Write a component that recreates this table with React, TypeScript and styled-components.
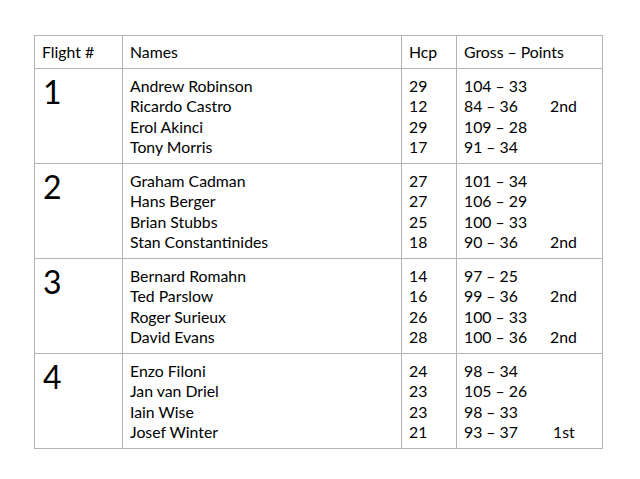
import React from "react";
import styled, { createGlobalStyle } from "styled-components";

const Global = createGlobalStyle`
  html, body { margin: 0; padding: 0; background: #fff; }
  body { font-family: Lato, "Open Sans", sans-serif; color: #000; }
`;

const Page = styled.div`
  width: 640px;
  height: 479px;
  padding: 35px 0 0 34px;
  box-sizing: border-box;
`;

const Table = styled.table`
  border-collapse: collapse;
  table-layout: fixed;
  width: 568px;
  font-size: 15.8px;
`;

const Th = styled.th<{ $w: number }>`
  width: ${(p) => p.$w}px;
  height: 33px;
  box-sizing: border-box;
  border: 1px solid #b4b4b4;
  text-align: left;
  font-weight: 400;
  padding: 0 0 2px 7px;
  vertical-align: middle;
`;

const Td = styled.td`
  border: 1px solid #b4b4b4;
  vertical-align: top;
  padding: 7px 0 0 7px;
  height: 95px;
  box-sizing: border-box;
`;

const Flight = styled.div`
  font-size: 32px;
  line-height: 1;
  margin-top: 0px;
  padding-left: 1px;
`;

const Line = styled.div`
  line-height: 20.4px;
  white-space: nowrap;
  display: flex;
`;

const Score = styled.span`
  width: 86px;
`;

const Place = styled.span<{ $shift: number }>`
  margin-left: ${(p) => p.$shift}px;
`;

type P = { name: string; hcp: string; score: string; place?: string; shift?: number };
const flights: P[][] = [
  [
    { name: "Andrew Robinson", hcp: "29", score: "104 – 33" },
    { name: "Ricardo Castro", hcp: "12", score: "84 – 36", place: "2nd" },
    { name: "Erol Akinci", hcp: "29", score: "109 – 28" },
    { name: "Tony Morris", hcp: "17", score: "91 – 34" },
  ],
  [
    { name: "Graham Cadman", hcp: "27", score: "101 – 34" },
    { name: "Hans Berger", hcp: "27", score: "106 – 29" },
    { name: "Brian Stubbs", hcp: "25", score: "100 – 33" },
    { name: "Stan Constantinides", hcp: "18", score: "90 – 36", place: "2nd" },
  ],
  [
    { name: "Bernard Romahn", hcp: "14", score: "97 – 25" },
    { name: "Ted Parslow", hcp: "16", score: "99 – 36", place: "2nd" },
    { name: "Roger Surieux", hcp: "26", score: "100 – 33" },
    { name: "David Evans", hcp: "28", score: "100 – 36", place: "2nd" },
  ],
  [
    { name: "Enzo Filoni", hcp: "24", score: "98 – 34" },
    { name: "Jan van Driel", hcp: "23", score: "105 – 26" },
    { name: "Iain Wise", hcp: "23", score: "98 – 33" },
    { name: "Josef Winter", hcp: "21", score: "93 – 37", place: "1st", shift: 3 },
  ],
];

export default function App() {
  return (
    <Page>
      <Global />
      <Table>
        <thead>
          <tr>
            <Th $w={88}>Flight #</Th>
            <Th $w={279}>Names</Th>
            <Th $w={55}>Hcp</Th>
            <Th $w={146}>Gross – Points</Th>
          </tr>
        </thead>
        <tbody>
          {flights.map((f, i) => (
            <tr key={i}>
              <Td>
                <Flight>{i + 1}</Flight>
              </Td>
              <Td>
                {f.map((p) => (
                  <Line key={p.name}>{p.name}</Line>
                ))}
              </Td>
              <Td>
                {f.map((p) => (
                  <Line key={p.name}>{p.hcp}</Line>
                ))}
              </Td>
              <Td>
                {f.map((p) => (
                  <Line key={p.name}>
                    <Score>{p.score}</Score>
                    {p.place && <Place $shift={p.shift ?? 0}>{p.place}</Place>}
                  </Line>
                ))}
              </Td>
            </tr>
          ))}
        </tbody>
      </Table>
    </Page>
  );
}
